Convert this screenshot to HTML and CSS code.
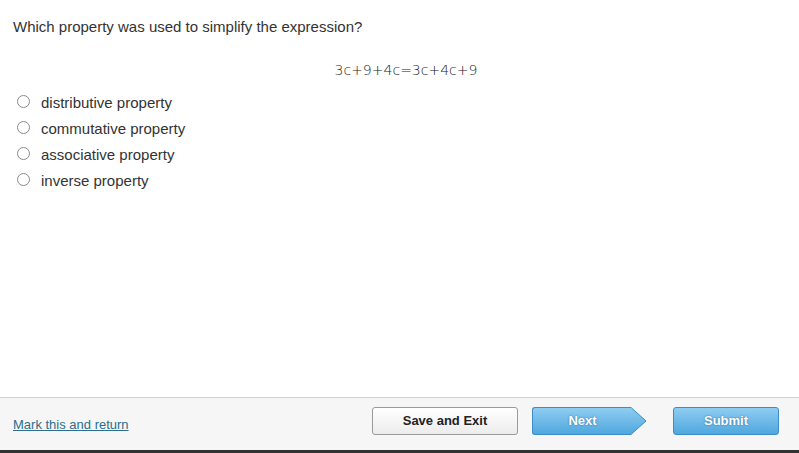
FILE: index.html
```html
<!DOCTYPE html>
<html>
<head>
<meta charset="utf-8">
<link rel="stylesheet" href="styles.css">
</head>
<body>
<div class="page">
  <main class="content">
    <p class="question">Which property was used to simplify the expression?</p>
    <div class="equation"><span>3c</span><span class="op">+</span><span>9</span><span class="op">+</span><span>4c</span><span class="op eq">=</span><span>3c</span><span class="op">+</span><span>4c</span><span class="op">+</span><span>9</span></div>
    <ul class="options">
      <li class="option"><span class="radio"></span><span class="label">distributive property</span></li>
      <li class="option"><span class="radio"></span><span class="label">commutative property</span></li>
      <li class="option"><span class="radio"></span><span class="label">associative property</span></li>
      <li class="option"><span class="radio"></span><span class="label">inverse property</span></li>
    </ul>
  </main>
  <footer class="footer">
    <a class="mark-link" href="#">Mark this and return</a>
    <div class="actions">
      <button class="btn btn-save">Save and Exit</button>
      <button class="btn btn-next"><span class="next-body">Next</span><svg class="next-arrow" width="17" height="28" viewBox="0 0 17 28"><defs><linearGradient id="ng" x1="0" y1="0" x2="0" y2="1"><stop offset="0" stop-color="#8fcdf1"/><stop offset="1" stop-color="#4fa7de"/></linearGradient></defs><path d="M0 0.5 L1 0.5 L16 14 L1 27.5 L0 27.5 Z" fill="url(#ng)" stroke="#3d8cc4" stroke-width="1"/><rect x="0" y="1" width="1.5" height="26" fill="url(#ng)"/></svg></button>
      <button class="btn btn-submit">Submit</button>
    </div>
  </footer>
  <div class="bottom-band"></div>
</div>
</body>
</html>
```

FILE: styles.css
```css
html, body {
  margin: 0;
  padding: 0;
  background: #ffffff;
}

.page {
  width: 799px;
  height: 453px;
  display: flex;
  flex-direction: column;
  font-family: "Liberation Sans", Arial, sans-serif;
  color: #333333;
}

.content {
  height: 397px;
  padding: 0 13px;
  box-sizing: border-box;
}

.question {
  margin: 0;
  padding-top: 18px;
  font-size: 15px;
  line-height: 18px;
}

.equation {
  margin-top: 25px;
  display: flex;
  justify-content: center;
  font-family: "DejaVu Sans", sans-serif;
  font-weight: 200;
  font-size: 14px;
  line-height: 18px;
  color: #222;
  padding-left: 13px;
}

.options {
  list-style: none;
  margin: 9px 0 0 0;
  padding: 0;
  display: flex;
  flex-direction: column;
}

.option {
  display: flex;
  align-items: center;
  height: 26px;
  font-size: 15px;
}

.radio {
  width: 11px;
  height: 11px;
  border: 1px solid #8a8a8a;
  border-radius: 50%;
  background: #fff;
  margin-left: 4px;
  margin-right: 11px;
  flex: none;
}

.label {
  position: relative;
  top: 1px;
}

.footer {
  height: 52px;
  border-top: 1px solid #d0d0d0;
  background: #f6f6f6;
  display: flex;
  align-items: center;
  justify-content: space-between;
  padding: 0 20px 0 13px;
}

.mark-link {
  font-size: 13px;
  color: #2d6e8c;
  text-decoration: underline;
  margin-top: 1px;
}

.actions {
  display: flex;
  align-items: center;
  margin-top: -7px;
}

.btn {
  font-family: "Liberation Sans", Arial, sans-serif;
  font-weight: bold;
  font-size: 13px;
  height: 28px;
  box-sizing: border-box;
  padding: 0;
  cursor: pointer;
}

.btn-save {
  width: 146px;
  border: 1px solid #9a9a9a;
  border-radius: 3px;
  background: linear-gradient(#ffffff, #ececec);
  color: #222;
}

.btn-next {
  margin-left: 14px;
  display: flex;
  align-items: stretch;
  border: none;
  background: none;
  width: 115px;
}

.next-body {
  flex: 1;
  display: flex;
  align-items: center;
  justify-content: center;
  padding-left: 2px;
  border: 1px solid #3d8cc4;
  border-right: none;
  border-radius: 3px 0 0 3px;
  background: linear-gradient(#8fcdf1, #4fa7de);
  color: #fff;
  text-shadow: 0 0 2px #2a6f9e;
}

.next-arrow {
  flex: none;
  display: block;
}

.btn-submit {
  margin-left: 26px;
  width: 106px;
  border: 1px solid #3d8cc4;
  border-radius: 3px;
  background: linear-gradient(#8fcdf1, #4fa7de);
  color: #fff;
  text-shadow: 0 0 2px #2a6f9e;
}

.bottom-band {
  height: 3px;
  background: #333333;
}
```
